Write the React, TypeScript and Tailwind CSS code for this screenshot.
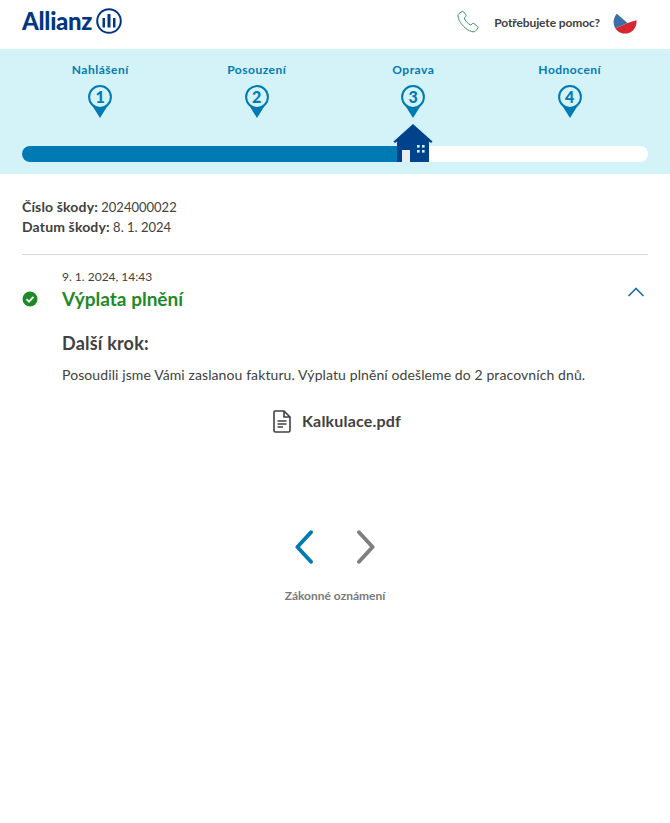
import { ChevronUp } from "lucide-react"

const steps = ["Nahlášení", "Posouzení", "Oprava", "Hodnocení"]

function Pin({ n }: { n: number }) {
  return (
    <div className="relative h-[33px] w-[24px]">
      <svg width="24" height="33" viewBox="0 0 24 33" className="block">
        <path d="M2 17 L12 33 L22 17 Z" fill="#007ab3" />
        <circle cx="12" cy="12" r="10.9" fill="#d3f3f9" stroke="#007ab3" strokeWidth="2" />
      </svg>
      <span className="absolute left-0 top-0 w-full text-center text-[16px] leading-[24px] font-black text-[#007ab3]">
        {n}
      </span>
    </div>
  )
}

function House() {
  return (
    <svg width="40" height="38" viewBox="0 0 40 38" className="block">
      <path d="M20 0 L39.5 17.5 L38 19 L36 17.5 V38 H4 V17.5 L2 19 L0.5 17.5 Z" fill="#00438c" />
      <rect x="9" y="26" width="8" height="12" fill="#e8eef2" />
      <rect x="24" y="21" width="2.6" height="2.6" fill="#d3f3f9" />
      <rect x="29" y="21" width="2.6" height="2.6" fill="#d3f3f9" />
      <rect x="24" y="26" width="2.6" height="2.6" fill="#d3f3f9" />
      <rect x="29" y="26" width="2.6" height="2.6" fill="#d3f3f9" />
    </svg>
  )
}

function Logo() {
  return (
    <div className="mb-[7px] flex items-center gap-[4px]">
      <span className="text-[24px] leading-none font-black tracking-[-0.3px] text-[#003781]">Allianz</span>
      <svg width="26" height="26" viewBox="0 0 26 26" fill="none">
        <circle cx="13" cy="13" r="11.8" stroke="#003781" strokeWidth="2" />
        <path d="M6.5 10 H9 V19.5 H6.5 Z M11.5 6 H14.5 V19.5 H11.5 Z M17 10 H19.5 V19.5 H17 Z" fill="#003781" />
      </svg>
    </div>
  )
}

function PhoneIcon() {
  return (
    <svg width="22" height="23" viewBox="0 0 22 22" fill="none" stroke="#3f8f6f" strokeWidth="1" className="mb-[6px]">
      <path d="M5 1 L2 3 C0.5 4 1 6 1.5 8 C3 13 9 19.5 14.5 21 C16.5 21.5 18 21.5 19 20 L21 17.5 C21.4 17 21.2 16.4 20.7 16 L16.8 13 C16.2 12.6 15.6 12.7 15.2 13.2 L13.8 14.6 C11 13.5 8 10 7.2 7.5 L8.8 6 C9.3 5.5 9.3 5 9 4.4 L6.4 1.2 C6 0.8 5.5 0.7 5 1 Z" />
    </svg>
  )
}

function Flag() {
  return (
    <svg width="24" height="24" viewBox="0 0 24 24" className="mb-[5px]">
      <defs>
        <clipPath id="flagClip">
          <circle cx="12" cy="12" r="11.5" />
        </clipPath>
      </defs>
      <g clipPath="url(#flagClip)">
        <path d="M1 19 L14.5 13 L24 10 V24 H0 Z" fill="#d7262f" />
        <path d="M3 3 L14.5 13 L1 19 L0 12 Z" fill="#3d6ea5" />
      </g>
    </svg>
  )
}

export default function App() {
  return (
    <div className="min-h-[823px] bg-white font-['Lato',sans-serif] text-[#414141]">
      <header className="flex h-[49px] items-center justify-between pl-[22px] pr-[33px]">
        <Logo />
        <div className="flex items-center">
          <PhoneIcon />
          <span className="mb-[3px] ml-[15px] text-[12px] font-bold tracking-[-0.1px]">Potřebujete pomoc?</span>
          <div className="ml-[13px]">
            <Flag />
          </div>
        </div>
      </header>

      <section className="h-[125px] bg-[#d3f3f9] px-[22px] pt-[14px]">
        <div className="grid grid-cols-4">
          {steps.map((step, i) => (
            <div key={step} className="flex flex-col items-center">
              <span className="text-[12px] leading-[14px] font-bold tracking-[0.5px] text-[#007ab3]">{step}</span>
              <div className="mt-[8px]">
                <Pin n={i + 1} />
              </div>
            </div>
          ))}
        </div>
        <div className="relative mt-[28px] h-[16px] rounded-full bg-white">
          <div className="h-full w-[378px] rounded-l-full bg-[#007ab3]" />
          <div className="absolute bottom-0 left-[371px]">
            <House />
          </div>
        </div>
      </section>

      <main className="px-[22px]">
        <div className="pt-[23px] pb-[17px] text-[13px] leading-[20px]">
          <p>
            <b className="text-[14px] font-bold tracking-[0.15px]">Číslo škody:</b> 2024000022
          </p>
          <p>
            <b className="text-[14px] font-bold tracking-[0.15px]">Datum škody:</b> 8. 1. 2024
          </p>
        </div>
        <div className="border-t border-[#d9d9d9] pt-[14px]">
          <div className="flex items-start">
            <svg width="16" height="16" viewBox="0 0 16 16" className="mt-[22px] shrink-0">
              <circle cx="8" cy="8" r="7.5" fill="#1e8927" />
              <path d="M4.5 8.2 L7 10.6 L11.5 5.8" stroke="#fff" strokeWidth="1.8" fill="none" />
            </svg>
            <div className="ml-[24px] flex-1">
              <p className="text-[12px] leading-[15px]">9. 1. 2024, 14:43</p>
              <p className="mt-[3px] text-[19px] leading-[24px] font-bold text-[#1e8927]">Výplata plnění</p>
            </div>
            <ChevronUp className="mt-[9px] -mr-[2px] size-[28px] text-[#1a6e9a]" strokeWidth={1.5} />
          </div>
          <div className="pl-[40px]">
            <h2 className="mt-[20px] text-[18px] leading-[24px] font-bold tracking-[0.2px]">Další krok:</h2>
            <p className="mt-[10px] text-[14px] leading-[20px] tracking-[0.1px]">
              Posoudili jsme Vámi zaslanou fakturu. Výplatu plnění odešleme do 2 pracovních dnů.
            </p>
          </div>
          <div className="mt-[24px] flex items-center justify-center pl-[4px]">
            <svg width="18" height="23" viewBox="0 0 18 23" fill="none" stroke="#414141" strokeWidth="1.6">
              <path d="M1.8 1 H11 L17 7 V20.5 Q17 22 15.5 22 H2.5 Q1 22 1 20.5 V2 Q1 1 1.8 1 Z M11 1 V7 H17" />
              <path d="M4.5 11 H13.5 M4.5 14 H13.5 M4.5 17 H10" />
            </svg>
            <span className="ml-[11px] text-[16px] leading-[24px] font-bold tracking-[0.2px]">Kalkulace.pdf</span>
          </div>
        </div>
        <div className="mt-[97px] flex justify-center gap-[44px]">
          <svg width="18" height="34" viewBox="0 0 18 34" fill="none" stroke="#007ab3" strokeWidth="3.9" strokeLinecap="round" strokeLinejoin="round">
            <path d="M16 2.2 L2.4 17 L16 31.8" />
          </svg>
          <svg width="18" height="34" viewBox="0 0 18 34" fill="none" stroke="#7f7f7f" strokeWidth="3.9" strokeLinecap="round" strokeLinejoin="round">
            <path d="M2 2.2 L15.6 17 L2 31.8" />
          </svg>
        </div>
        <p className="mt-[24px] text-center text-[12px] leading-[16px] font-bold text-[#7a7a7a]">Zákonné oznámení</p>
      </main>
    </div>
  )
}
